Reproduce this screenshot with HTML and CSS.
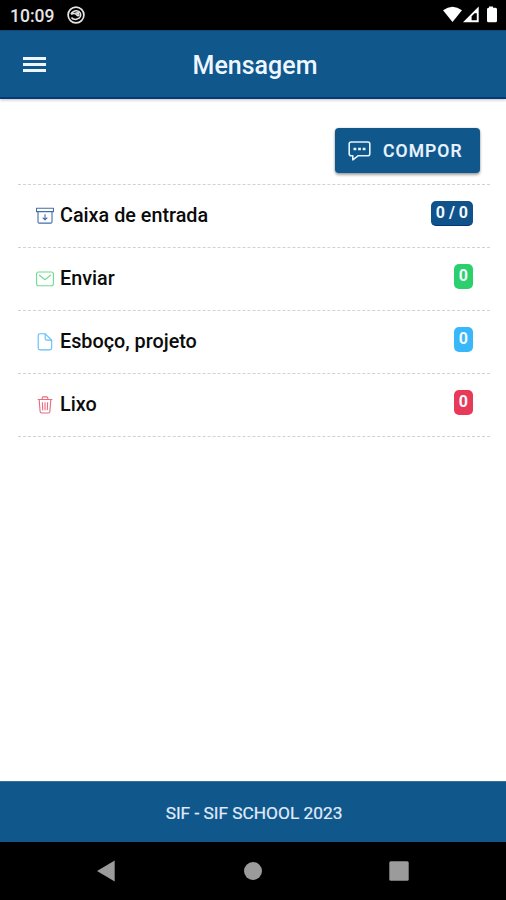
FILE: index.html
```html
<!DOCTYPE html>
<html lang="pt">
<head>
<meta charset="utf-8">
<title>Mensagem</title>
<link rel="stylesheet" href="styles.css">
</head>
<body>
<div class="screen">
  <div class="status">
    <span class="clock">10:09</span>
    <svg class="notice" width="18" height="18" viewBox="0 0 18 18" fill="none" stroke="#e6e6e6"><circle cx="9" cy="9" r="7.9" stroke-width="1.7"/><path d="M4 8.2C6 4.2 11.5 3.5 13.4 7.2c1.1 2.4-.5 5.2-2.8 5.5M4.2 8.5c1.7-1.6 4.4-1.3 5.3.2.7 1.3 2 1.4 2.7.2M4.5 11.5c1.3 2 4.3 2.5 6.1 1.2" stroke-width="1.5"/><path d="M8 6.2l3.7-.1 1 3-2.2-.4z" fill="#e6e6e6" stroke="none"/></svg>
    <svg class="signals" width="56" height="18" viewBox="0 0 56 18" fill="#fff"><path d="M0 4.3Q9.5-3 19 4.3L9.500 16z"/><path fill-rule="evenodd" d="M20 16.2 35.700.5v15.700zM28.600 14.200h5.200V7.200h-2.200l-3 3z"/><path d="M29.600 10.800l2.800-2.600v5h-2.800z" fill="#000"/><path d="M46 1.800V.5h4v1.300h2.500q1.500 0 1.500 1.500v11.400q0 1.500-1.500 1.500h-7q-1.500 0-1.500-1.500V3.300q0-1.500 1.500-1.500z"/></svg>
  </div>
  <header class="bar">
    <button class="menu" aria-label="Menu"><i></i><i></i><i></i></button>
    <h1>Mensagem</h1>
  </header>
  <main>
    <div class="actions">
      <button class="compose">
        <svg width="23" height="20" viewBox="0 0 23 20" fill="none" stroke="#e4f3ff" stroke-width="1.6" stroke-linejoin="round"><path d="M3.2 1h16.6q2 0 2 2v9.8q0 2-2 2H10l-5.2 4v-4H3.2q-2 0-2-2V3q0-2 2-2z"/><path d="M5.5 8h2.8M10.1 8h2.8M14.7 8h2.8" stroke-width="2.6"/></svg>
        <span>COMPOR</span>
      </button>
    </div>
    <ul class="folders">
      <li>
        <svg class="icon inbox" viewBox="0 0 18 18"><path d="M.5 1.3h17v3.3H.5zM2 4.6v10.3q0 1.2 1.2 1.2h11.6q1.2 0 1.2-1.2V4.6M9 7.2v5.6M6.7 10.6 9 12.9l2.3-2.3"/></svg>
        <span class="name">Caixa de entrada</span><span class="badge total">0 / 0</span>
      </li>
      <li>
        <svg class="icon sent" viewBox="0 0 18 18"><rect x=".6" y="2" width="16.8" height="13.8" rx="2"/><path d="M3.2 5 9 9.7 14.8 5"/></svg>
        <span class="name">Enviar</span><span class="badge green">0</span>
      </li>
      <li>
        <svg class="icon draft" viewBox="0 0 18 18"><path d="M4 .8h5.2l6.5 6.3v8q0 1.8-1.8 1.8H4q-1.8 0-1.8-1.8V2.6Q2.2.8 4 .8z"/><path d="M9.2.8v4.8q0 1.5 1.5 1.5h5"/></svg>
        <span class="name">Esboço, projeto</span><span class="badge sky">0</span>
      </li>
      <li>
        <svg class="icon trash" viewBox="0 0 18 18"><path d="M1.7 3.5h14.6M3.2 3.5l.9 12q.1 1.5 1.6 1.5h6.6q1.5 0 1.6-1.5l.9-12M6.2 3.5V1.9q0-1 1-1h3.6q1 0 1 1v1.6M6.4 6.3l.3 8M9 6.3v8M11.6 6.3l-.3 8"/></svg>
        <span class="name">Lixo</span><span class="badge red">0</span>
      </li>
    </ul>
  </main>
  <footer>SIF - SIF SCHOOL 2023</footer>
  <nav class="system">
    <svg width="18" height="22" viewBox="0 0 18 22"><path d="M0 11 17.7.5v21z"/></svg>
    <svg width="18" height="18" viewBox="0 0 18 18"><circle cx="9" cy="9" r="9"/></svg>
    <svg width="20" height="20" viewBox="0 0 20 20"><rect x=".3" y=".3" width="19.4" height="19.4" rx="1.5"/></svg>
  </nav>
</div>
</body>
</html>
```

FILE: styles.css
```css
* { box-sizing: border-box; }
body { margin: 0; font-family: Roboto, "Liberation Sans", sans-serif; background: #fff; color: #0b0b0b; }
button { border: 0; padding: 0; font: inherit; color: inherit; background: none; }
.screen { width: 506px; height: 900px; display: flex; flex-direction: column; overflow: hidden; }
.status { height: 30px; background: #000; color: #e6e6e6; display: flex; align-items: center; padding: 0 7px 0 10px; }
.clock { width: 57px; font-size: 17.5px; line-height: 30px; font-weight: 500; padding-top: 2px; white-space: nowrap; }
.signals { margin-left: auto; }
.bar { height: 69px; background: #10578c; border-top: 1px solid #0d4779; border-bottom: 2px solid #083876; box-shadow: 0 1px 3px rgba(0,0,0,.25); display: grid; grid-template-columns: 70px 1fr 66px; align-items: center; z-index: 1; }
.menu { width: 23px; margin-left: 23px; display: flex; flex-direction: column; gap: 3px; }
.menu i { height: 3px; background: #eef5ff; }
h1 { margin: 0; padding-top: 4px; text-align: center; color: #eef6ff; font-size: 25px; line-height: 30px; font-weight: 500; }
main { flex: 1; padding: 29px 16px 0 18px; }
.actions { height: 56px; padding-right: 10px; display: flex; justify-content: flex-end; align-items: flex-start; }
.compose { width: 145px; height: 45px; padding-left: 13px; display: flex; align-items: center; gap: 12px; border-radius: 4px; background: #10578c; color: #e9f4ff; font-size: 17.5px; line-height: 20px; font-weight: 500; letter-spacing: 1.1px; box-shadow: 0 2px 3px rgba(0,0,0,.35), 0 0 2px rgba(0,0,0,.2); -webkit-text-stroke: .2px #e9f4ff; }
.folders { list-style: none; margin: 0; padding: 0; border-top: 1px dashed #d2d2d2; }
.folders li { height: 63px; border-bottom: 1px dashed #d2d2d2; display: flex; align-items: center; padding: 0 17px 0 18px; }
.icon { width: 18px; height: 18px; fill: none; stroke-width: 1.1; stroke-linejoin: round; }
.inbox { stroke: #436ea8; }
.sent { stroke: #6fdb91; }
.draft { stroke: #61bdf5; }
.trash { stroke: #e66b7d; }
.name { margin-left: 6px; font-size: 19.8px; line-height: 24px; font-weight: 500; }
.badge { height: 25px; margin: -6px 0 0 auto; padding: 0 5px; border-radius: 5px; color: #f2faff; font-size: 16px; line-height: 24px; font-weight: 700; }
.total { background: #10528a; border-bottom: 1px solid #06347a; }
.green { background: #2bd06c; }
.sky { background: #38b8fa; }
.red { background: #e83a58; }
footer { height: 61px; background: #10578c; border-top: 1px solid #397298; color: #e1edfa; text-align: center; font-size: 17.3px; line-height: 62px; padding-left: 2px; -webkit-text-stroke: .2px #e1edfa; }
.system { height: 58px; background: #000; display: grid; grid-template-columns: 18px 18px 20px; justify-content: center; column-gap: 128px; align-items: center; }
.system svg { fill: #9b9b9b; }
.system svg:nth-child(2) { margin-left: 1px; }
```
